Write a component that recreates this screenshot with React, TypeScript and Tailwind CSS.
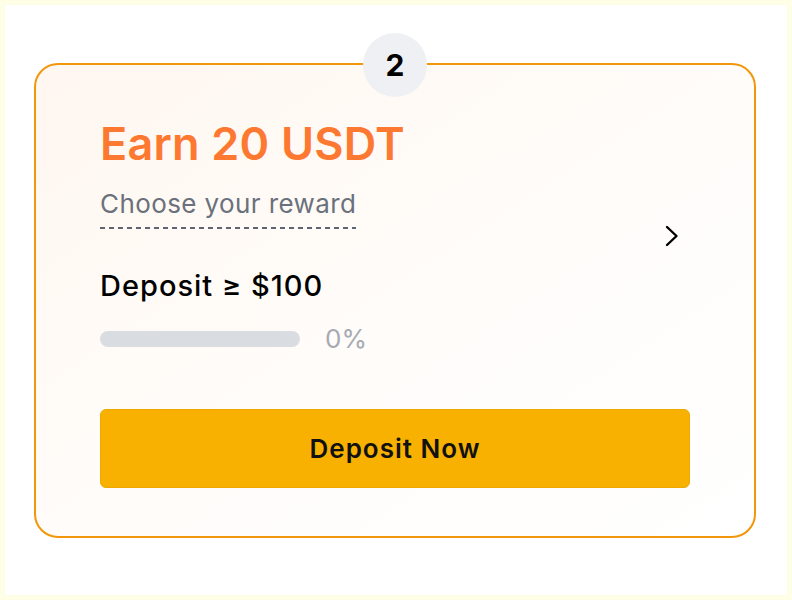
import React from "react";

export default function App() {
  return (
    <div className="w-[792px] h-[600px] bg-[#fefde6] p-[5px]" style={{ fontFamily: "Inter, 'Noto Sans', sans-serif" }}>
      <div className="w-full h-full bg-white pt-[58px] pl-[29px]">
        <div className="relative w-[722px] rounded-[24px] border-2 border-[#f2960c] bg-gradient-to-br from-[#fff7f0] via-[#fffcf9] to-white px-[64px] pt-[56px] pb-[48px] flex flex-col">
          <div className="absolute left-1/2 -translate-x-1/2 -top-[32px] w-[64px] h-[64px] rounded-full bg-[#eef0f3] flex items-center justify-center text-[30px] font-bold text-black">
            2
          </div>
          <div className="flex items-center">
            <div className="flex-1 flex flex-col">
              <div className="text-[45px] leading-[45px] font-semibold text-[#fd7932] tracking-[0.2px]">Earn 20 USDT</div>
              <div className="mt-[24px] self-start flex flex-col">
                <div className="text-[26px] leading-[27px] text-[#6b717c] tracking-[0.4px]">Choose your reward</div>
                <div className="mt-[10px] h-[1.5px] w-full bg-[repeating-linear-gradient(to_right,#5f6570_0_5px,transparent_5px_9px)]" />
              </div>
              <div className="mt-[42px] text-[29px] leading-[30px] font-medium text-black tracking-[1px]">Deposit ≥ $100</div>
              <div className="mt-[26px] flex items-center">
                <div className="w-[200px] h-[16px] rounded-full bg-[#d9dde2]" />
                <div className="ml-[25px] text-[26px] leading-[24px] text-[#a6abb3]">0%</div>
              </div>
            </div>
            <svg width="14" height="22" viewBox="0 0 14 22" className="mr-[11px] shrink-0" fill="none">
              <polyline points="2,2 11.5,11 2,20" stroke="#000" strokeWidth="2.4" strokeLinecap="round" strokeLinejoin="round" />
            </svg>
          </div>
          <button className="mt-[58px] shrink-0 h-[79px] w-full rounded-[6px] bg-[#f8b100] border border-[#efa800] text-[26px] font-semibold text-[#111] tracking-[1px]">
            Deposit Now
          </button>
        </div>
      </div>
    </div>
  );
}
